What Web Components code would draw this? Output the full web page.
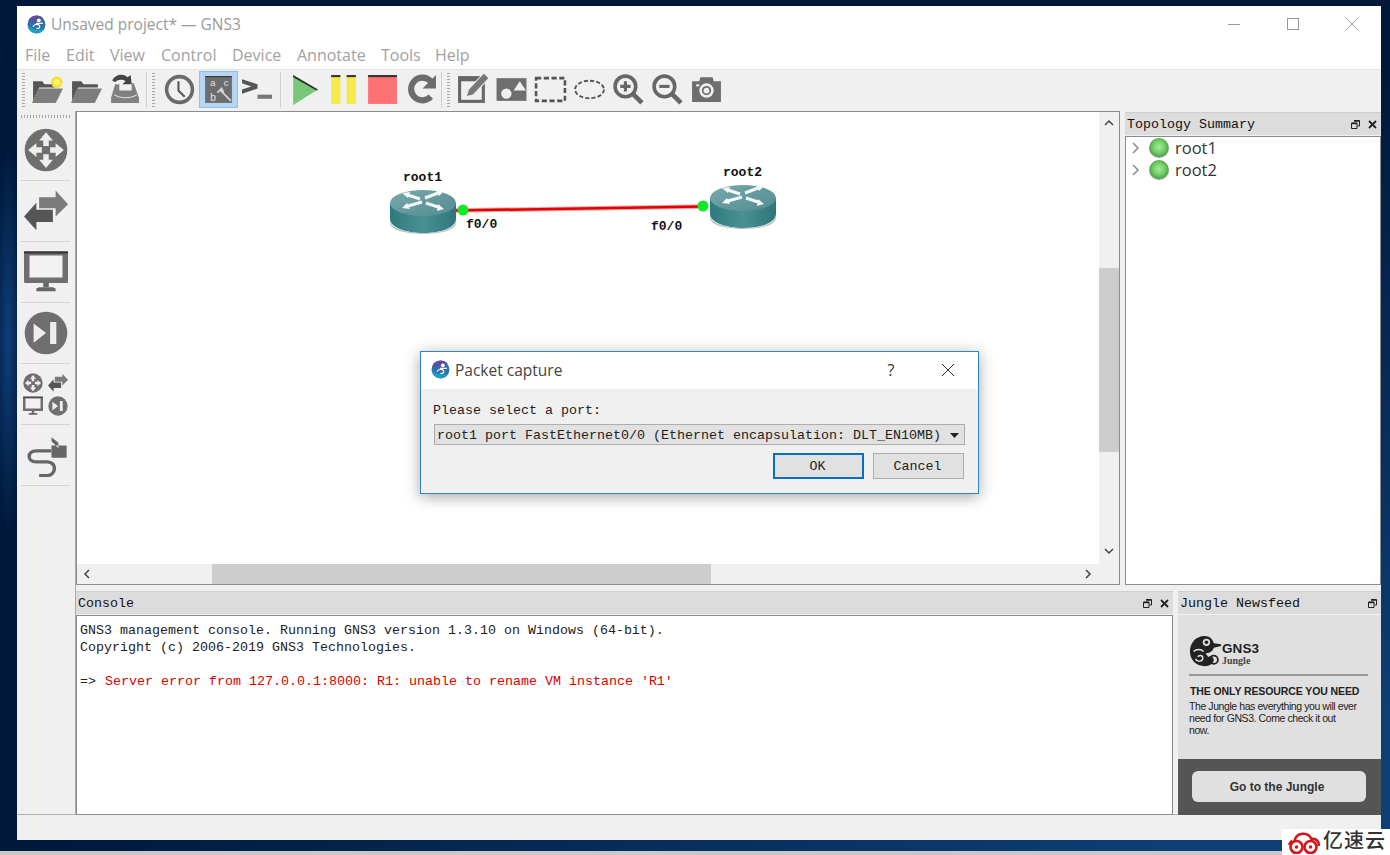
<!DOCTYPE html>
<html lang="en">
<head>
<meta charset="utf-8">
<title>GNS3</title>
<style>
  html, body { margin: 0; padding: 0; height: 855px; overflow: hidden; }
  body { font-family: "Liberation Mono", monospace; }
</style>
</head>
<body>
<gns-desktop>
  <gns-window>
    <gns-titlebar label="Unsaved project* — GNS3"></gns-titlebar>
    <gns-menubar></gns-menubar>
    <gns-toolbar></gns-toolbar>
    <gns-workspace></gns-workspace>
    <gns-dialog></gns-dialog>
  </gns-window>
  <gns-watermark></gns-watermark>
</gns-desktop>

<script>
// Icons are all drawn in a 32x32 box unless they bring their own viewBox
const ICONS = {
  folderNew: `<path d="M2 8h9l2 3h10v3H8L2 27z" fill="#555"/><path d="M7 15h24l-7 14H1z" fill="#7d7d7d"/><circle cx="25" cy="9" r="5.5" fill="#f2e22e"/><circle cx="25" cy="9" r="3" fill="#fff27a"/>`,
  folderOpen: `<path d="M2 8h9l2 3h14v3H8L2 27z" fill="#555"/><path d="M7 15h24l-7 14H1z" fill="#7d7d7d"/>`,
  save: `<path d="M6 11h4v6h12v-7h2l5 14v5H2v-5z" fill="#808080"/><path d="M5 21c6 4 16 4 22 0" stroke="#ddd" fill="none"/><path d="M3 7c3-6 11-7 15-3l3-2 1 9h-9l3-3c-3-2-7-2-10 1z" fill="#444"/>`,
  clock: `<circle cx="16" cy="16" r="12.5" fill="#f0f0f0" stroke="#6a6a6a" stroke-width="3.5"/><path d="M15 8v9l6 6" fill="none" stroke="#555" stroke-width="2"/>`,
  note: `<rect x="2" y="3" width="26" height="26" fill="#666"/><rect x="5" y="8" width="20" height="18" fill="#f0f0f0"/><path d="M27 0l5 5-15 16-7 2 2-7z" fill="#777" stroke="#f0f0f0" stroke-width="1"/>`,
  labels: `<rect x="3" y="3" width="26" height="26" fill="#6d6d6d"/><rect x="3" y="3" width="26" height="1" fill="#333"/><text x="8" y="13" font-size="9" font-family="Liberation Sans" fill="#e4e4e4">a</text><text x="21" y="13" font-size="9" font-family="Liberation Sans" fill="#e4e4e4">c</text><text x="8" y="27" font-size="10" font-family="Liberation Sans" fill="#e4e4e4">b</text><path d="M15 19l4-4 2 4M18 17l10 10" fill="none" stroke="#d8d8d8" stroke-width="1.6"/>`,
  terminal: `<path d="M1 6l15 5v4L1 20v-4l9-3-9-3z" fill="#555"/><rect x="16" y="21" width="14" height="4" fill="#777"/>`,
  play: `<path d="M5 2l24 14L5 31z" fill="#78c878"/><path d="M5 2l24 14-1.5 1L5 4z" fill="#333"/>`,
  pause: `<rect x="4" y="2" width="9" height="28" fill="#f4ea4a"/><rect x="19" y="2" width="9" height="28" fill="#f4ea4a"/><rect x="4" y="2" width="9" height="2" fill="#333"/><rect x="19" y="2" width="9" height="2" fill="#333"/>`,
  stop: `<rect x="2" y="2" width="28" height="28" fill="#ff7274"/><rect x="2" y="2" width="28" height="2" fill="#333"/>`,
  reload: `<path d="M25 23a11 11 0 1 1 0-15" fill="none" stroke="#6c6c6c" stroke-width="6"/><path d="M30 2v13H17z" fill="#6c6c6c"/>`,
  image: `<rect x="1.5" y="5" width="29" height="22" fill="#6e6e6e"/><circle cx="11" cy="20" r="5" fill="#f0f0f0"/><path d="M18 17l6-9 6 9z" fill="#f0f0f0"/>`,
  rect: `<rect x="2" y="5" width="28" height="22" fill="none" stroke="#555" stroke-width="2.5" stroke-dasharray="5 2.5"/>`,
  ellipse: `<ellipse cx="16" cy="16" rx="14" ry="8.5" fill="none" stroke="#555" stroke-width="1.8" stroke-dasharray="4 2"/>`,
  zoomIn: `<circle cx="13" cy="13" r="10" fill="#f0f0f0" stroke="#666" stroke-width="3.5"/><path d="M20 20l9 9" stroke="#666" stroke-width="4.5"/><path d="M8 13h10M13 8v10" stroke="#666" stroke-width="3"/>`,
  zoomOut: `<circle cx="13" cy="13" r="10" fill="#f0f0f0" stroke="#666" stroke-width="3.5"/><path d="M20 20l9 9" stroke="#666" stroke-width="4.5"/><path d="M8 13h10" stroke="#666" stroke-width="3"/>`,
  camera: `<path d="M2 8h7l1-4h12l1 4h7v20H2z" fill="#6e6e6e"/><rect x="6" y="11" width="3" height="2" fill="#eee"/><circle cx="16" cy="17" r="7" fill="#f0f0f0"/><circle cx="16" cy="17" r="4.5" fill="#6e6e6e"/><circle cx="16" cy="17" r="2.8" fill="#f0f0f0"/>`,
  routers: `<circle cx="16" cy="16" r="15.5" fill="#6f6f6f"/><path d="M16 3l5 6h-3v4h-4V9h-3zM16 29l-5-6h3v-4h4v4h3zM3 16l6-5v3h4v4H9v3zM29 16l-6 5v-3h-4v-4h4v-3z" fill="#eee"/>`,
  switches: `<path d="M11 5h12V0l9 10-9 9v-6H11z" fill="#7a7a7a" transform="translate(0 1)"/><path d="M21 15H9v-5L0 20l9 10v-6h12z" fill="#555"/>`,
  monitor: `<rect x="0" y="1" width="32" height="23" rx="1" fill="#6e6e6e"/><rect x="0" y="1" width="32" height="1.5" fill="#333"/><rect x="4" y="4" width="24" height="16" fill="#f2f2f2"/><rect x="14" y="24" width="4" height="3" fill="#666"/><path d="M9 30v-2l2-1h10l2 1v2z" fill="#666"/>`,
  skip: `<circle cx="16" cy="16" r="15.5" fill="#6f6f6f"/><path d="M7 9l9 7-9 7z" fill="#eee"/><rect x="19" y="8" width="4.5" height="16" fill="#eee"/>`,
  cable: `<path d="M25 7l-5-4v3l5 5zM20 9h11v9H20z" fill="#666"/><path d="M20 13H9c-7 0-7 8 0 8h8c7 0 7 10-1 10h-5" fill="none" stroke="#666" stroke-width="2.5"/>`,
  logo: `<circle cx="16" cy="16" r="15" fill="#2f6fa8"/><path d="M16 1a15 15 0 0 0-14 10c5-1 12 0 15 1 5-2 9-4 10-7a15 15 0 0 0-11-4z" fill="#5c4ea0"/><path d="M1 17a15 15 0 0 0 28 6c-7 3-20 2-28-6z" fill="#1d9fc0"/><circle cx="20" cy="9" r="3.2" fill="#fff"/><path d="M10 20c2-5 9-5 11-2s-2 6-5 4" fill="none" stroke="#fff" stroke-width="2"/><path d="M15 14h12" stroke="#fff" stroke-width="2"/>`,
  logoDark: `<path d="M17 1C8 1 1 8 1 18c0 9 7 16 16 16 6 0 10-3 10-7 0-3-4-5-6-3l-3-4c4 0 8-2 9-6l8-2v-2l-8-1c-1-5-5-8-10-8z" fill="#222"/><circle cx="19" cy="8" r="4" fill="#e0e0e0"/><circle cx="19" cy="8" r="2" fill="#222"/><circle cx="27" cy="27" r="4.5" fill="none" stroke="#222" stroke-width="2"/><path d="M5 18c3-3 8-3 11 0M7 26c2 4 8 3 8-1s-5-3-5-1" fill="none" stroke="#e0e0e0" stroke-width="1.6"/>`
};

function icon(name, size, box = 32) {
  return `<svg width="${size}" height="${size}" viewBox="0 0 ${box} ${box}" aria-hidden="true">${ICONS[name]}</svg>`;
}

// Small helper, each element is just a shadow root with its own style + markup
class Base extends HTMLElement {
  constructor() {
    super();
    this.attachShadow({ mode: 'open' });
  }
  render(css, html) {
    this.shadowRoot.innerHTML = `<style>${css}</style>${html}`;
  }
}

class GnsDesktop extends Base {
  connectedCallback() {
    this.render(`
      :host { display: block; position: relative; width: 1390px; height: 855px; overflow: hidden;
        background:
          radial-gradient(14px 200px at 8px 340px, #0e3f7a 0, rgba(14,63,122,0) 100%),
          linear-gradient(150deg, #00183a 0 52%, #0d3f76 92%); }
      .top { padding: 6px 9px 0 17px; height: 851px; box-sizing: border-box; }
      .strip { height: 4px; background: #c8c8c8; }
    `, `<div class="top"><slot></slot></div><div class="strip"></div>`);
  }
}

class GnsWindow extends Base {
  connectedCallback() {
    this.render(`
      :host { display: flex; flex-direction: column; position: relative; width: 1364px; height: 834px;
        background: #f0f0f0; }
    `, `<slot></slot>`);
  }
}

class GnsTitlebar extends Base {
  connectedCallback() {
    this.render(`
      :host { display: flex; align-items: center; height: 36px; background: #fff; flex: none;
        padding-left: 10px; font: 15.5px "Open Sans", sans-serif; color: #9a9a9a; }
      span { margin-left: 5px; }
      .btns { margin-left: auto; display: flex; }
      .btns div { width: 59px; height: 36px; display: flex; align-items: center; justify-content: center; }
      svg { display: block; }
    `, `${icon('logo', 19)}<span>${this.getAttribute('label')}</span>
      <div class="btns">
        <div><svg width="12" height="12"><path d="M0 6.5h12" stroke="#999"/></svg></div>
        <div><svg width="12" height="12"><rect x=".5" y=".5" width="11" height="11" fill="none" stroke="#999"/></svg></div>
        <div><svg width="12" height="12"><path d="M0 0l12 12M12 0L0 12" stroke="#999"/></svg></div>
      </div>`);
  }
}

class GnsMenubar extends Base {
  connectedCallback() {
    const items = [['File', 8], ['Edit', 49], ['View', 93], ['Control', 144], ['Device', 215], ['Annotate', 280], ['Tools', 364], ['Help', 418]];
    const html = items.map(([t, x], i) => {
      const next = items[i + 1] ? items[i + 1][1] : x + 40;
      return `<span style="width:${next - x}px">${t}</span>`;
    }).join('');
    this.render(`
      :host { display: flex; align-items: center; height: 27px; flex: none; background: #fff; padding: 0 0 2px 8px; box-sizing: border-box;
        font: 16px "Open Sans", sans-serif; color: #a2a2a2; }
      span { display: block; }
    `, html);
  }
}

class GnsToolbar extends Base {
  connectedCallback() {
    const btn = (n, on) => `<div class="b${on ? ' on' : ''}">${icon(n, 33)}</div>`;
    this.render(`
      :host { display: flex; align-items: center; height: 42px; flex: none; background: #f0f0f0;
        box-sizing: border-box; border-top: 1px solid #e4e4e4; padding: 0 0 2px 5px; }
      .h { width: 3px; height: 34px; flex: none;
        background: repeating-linear-gradient(to bottom, #a8a8a8 0 1px, transparent 1px 3px); }
      .b { width: 39px; height: 37px; flex: none; display: flex; align-items: center; justify-content: center; box-sizing: border-box; }
      .on { background: #b5d6f2; border: 1px solid #8ec0e8; }
      .s { width: 1px; height: 36px; background: #d0d0d0; flex: none; }
      svg { display: block; }
    `, `
      <div class="h" style="margin-right:3px"></div>
      ${btn('folderNew')}${btn('folderOpen')}${btn('save')}
      <div class="s" style="margin:0 5px 0 1px"></div>
      <div class="h" style="margin-right:5px"></div>
      ${btn('clock')}${btn('labels', true)}${btn('terminal')}
      <div class="s" style="margin:0 4px 0 3px"></div>
      ${btn('play')}${btn('pause')}${btn('stop')}${btn('reload')}
      <div class="s" style="margin:0 5px 0 0"></div>
      <div class="h" style="margin-right:3px"></div>
      ${btn('note')}${btn('image')}${btn('rect')}${btn('ellipse')}${btn('zoomIn')}${btn('zoomOut')}${btn('camera')}
    `);
  }
}

class GnsWorkspace extends Base {
  connectedCallback() {
    this.render(`
      :host { display: block; flex: 1; min-height: 0; }
      .grid { display: grid; grid-template-columns: 59px 1fr; height: 704px; border-bottom: 1px solid #b0b0b0; box-sizing: border-box; }
      .right { display: flex; flex-direction: column; }
      .top { display: flex; gap: 5px; height: 480px; }
      .bottom { display: flex; gap: 5px; height: 223px; }
      gns-canvas { width: 1044px; height: 474px; }
      .topo { width: 256px; height: 473px; margin-top: 1px; }
      .console { width: 1097px; height: 224px; }
      .jungle { width: 203px; height: 224px; }
      .status { height: 25px; }
    `, `
      <div class="grid">
        <gns-devices></gns-devices>
        <div class="right">
          <div class="top">
            <gns-canvas></gns-canvas>
            <gns-dock class="topo" label="Topology Summary" closable><gns-topology></gns-topology></gns-dock>
          </div>
          <div class="bottom">
            <gns-dock class="console" label="Console" closable><gns-console></gns-console></gns-dock>
            <gns-dock class="jungle" label="Jungle Newsfeed"><gns-jungle></gns-jungle></gns-dock>
          </div>
        </div>
      </div>
      <div class="status"></div>
    `);
  }
}

class GnsDevices extends Base {
  connectedCallback() {
    const row = (n) => `<div class="r">${icon(n, 44)}</div>`;
    this.render(`
      :host { display: block; border-right: 1px solid #aaa; box-sizing: border-box; height: 703px; padding-top: 4px; }
      .h { height: 3px; margin: 0 5px 0 4px; background: repeating-linear-gradient(to right, #a8a8a8 0 1px, transparent 1px 3px); }
      .r { height: 60px; margin: 0 5px 0 4px; border-bottom: 1px solid #d4d4d4; display: flex; align-items: center; justify-content: center; }
      .first { padding-top: 2px; }
      .q { display: grid; grid-template-columns: 22px 22px; gap: 3px; margin-left: 1px; }
      svg { display: block; }
    `, `
      <div class="h"></div>
      <div class="r first">${icon('routers', 44)}</div>
      ${row('switches')}${row('monitor')}${row('skip')}
      <div class="r"><div class="q">${icon('routers', 20)}${icon('switches', 20)}${icon('monitor', 20)}${icon('skip', 20)}</div></div>
      ${row('cable')}
    `);
  }
}

class GnsCanvas extends Base {
  connectedCallback() {
    const chev = (d) => `<svg width="10" height="10" viewBox="0 0 10 10"><path d="${d}" fill="none" stroke="#444" stroke-width="1.5"/></svg>`;
    this.render(`
      :host { display: block; position: relative; box-sizing: border-box; border: 1px solid #8c8c8c; background: #fff; }
      .vbar, .hbar { position: absolute; background: #f0f0f0; display: flex; }
      .vbar { right: 0; top: 0; width: 20px; bottom: 20px; flex-direction: column; align-items: center; justify-content: space-between; padding: 6px 0 8px; box-sizing: border-box; }
      .hbar { left: 0; bottom: 0; height: 20px; right: 20px; align-items: center; justify-content: space-between; padding: 0 6px 0 5px; box-sizing: border-box; }
      .corner { position: absolute; right: 0; bottom: 0; width: 20px; height: 20px; background: #f0f0f0; }
      .vt { position: absolute; left: 0; width: 20px; top: 156px; height: 184px; background: #cdcdcd; }
      .ht { position: absolute; top: 0; height: 20px; left: 135px; width: 499px; background: #cdcdcd; }
      svg { display: block; position: relative; }
      gns-router { position: absolute; }
      .lbl { position: absolute; font: bold 13px "Liberation Mono", monospace; color: #111; line-height: 14px; }
      .link { position: absolute; left: 0; top: 0; }
    `, `
      <svg class="link" width="1024" height="300">
        <path d="M378 98.5L626 94.5" stroke="#f3a6a6" stroke-width="4.5"/>
        <path d="M378 98.5L626 94.5" stroke="#e30000" stroke-width="2.5"/>
        <circle cx="386" cy="98" r="5.5" fill="#11e82a"/><circle cx="626" cy="94" r="5.5" fill="#11e82a"/>
      </svg>
      <gns-router style="left:313px;top:77px"></gns-router>
      <gns-router style="left:633px;top:72px"></gns-router>
      <div class="lbl" style="left:326px;top:59px">root1</div>
      <div class="lbl" style="left:646px;top:54px">root2</div>
      <div class="lbl" style="left:389px;top:106px">f0/0</div>
      <div class="lbl" style="left:574px;top:108px">f0/0</div>
      <div class="vbar">${chev('M1 7l4-4 4 4')}<div class="vt"></div>${chev('M1 3l4 4 4-4')}</div>
      <div class="hbar">${chev('M7 1L3 5l4 4')}<div class="ht"></div>${chev('M3 1l4 4-4 4')}</div>
      <div class="corner"></div>
    `);
  }
}

class GnsRouter extends Base {
  connectedCallback() {
    this.render(`
      :host { display: block; width: 67px; height: 45px; }
      svg { display: block; }
    `, `<svg width="67" height="45" viewBox="0 0 67 45">
      <defs>
        <linearGradient id="s" x1="0" x2="1"><stop offset="0" stop-color="#2f7a7e"/><stop offset=".5" stop-color="#4a9094"/><stop offset="1" stop-color="#2e767a"/></linearGradient>
        <linearGradient id="t" x1="0" x2="1" y1="0" y2="1"><stop offset="0" stop-color="#7aa8ac"/><stop offset="1" stop-color="#4f8d92"/></linearGradient>
      </defs>
      <path d="M0 14v16c0 8 15 14 33.5 14S66 38 66 30V14z" fill="url(#s)"/>
      <path d="M0 31c0 8 15 13 33.5 13S66 39 66 31v3c0 7-15 11-32.5 11S0 41 0 34z" fill="#b9c4c4"/>
      <ellipse cx="33" cy="14" rx="33" ry="13" fill="url(#t)"/>
      <g stroke="#f6f9f9" stroke-width="3" fill="none">
        <path d="M18 6l12 4M35 9l13-5M32 13l-14 4M36 14l12 4"/>
      </g>
      <path d="M12 4l8-1-2 6zM54 2l-8-1 3 6zM12 19l8 1-3-6zM54 20l-7 2 1-7z" fill="#f6f9f9"/>
    </svg>`);
  }
}

class GnsDock extends Base {
  connectedCallback() {
    const close = this.hasAttribute('closable')
      ? `<svg width="9" height="9" viewBox="0 0 9 9"><path d="M1 1l7 7M8 1L1 8" stroke="#222" stroke-width="1.8"/></svg>` : '';
    this.render(`
      :host { display: flex; flex-direction: column; box-sizing: border-box; }
      .t { height: 23px; flex: none; background: #dcdcdc; border-top: 1px solid #cfcfcf; box-sizing: border-box; display: flex; align-items: center;
        padding: 1px 4px 0 2px; font: 13.33px/20px "Liberation Mono", monospace; color: #111; white-space: pre; }
      .fl { margin-left: auto; display: flex; gap: 8px; align-items: center; margin-top: -1px; }
      .c { flex: 1; min-height: 0; margin-top: 1px; border: 1px solid #8c8c8c; box-sizing: border-box; background: #fff; display: flex; }
      svg { display: block; }
      ::slotted(*) { flex: 1; min-width: 0; }
    `, `<div class="t">${this.getAttribute('label')}<div class="fl">
        <svg width="9" height="9" viewBox="0 0 9 9"><path d="M3 .5h5.5V6H6.5M.5 3H6v5.5H.5z" fill="none" stroke="#222"/><path d="M3 1h5M1 3.5h5" stroke="#222" stroke-width="1.4"/></svg>${close}
      </div></div><div class="c"><slot></slot></div>`);
  }
}

class GnsTopology extends Base {
  connectedCallback() {
    const row = (t) => `<div class="r">
      <svg width="8" height="12" viewBox="0 0 8 12"><path d="M1 1l5 5-5 5" fill="none" stroke="#8a8a8a" stroke-width="1.5"/></svg>
      <span class="led"></span><span class="n">${t}</span></div>`;
    this.render(`
      :host { display: block; font: 16.5px "Open Sans", sans-serif; color: #333; }
      .r { display: flex; align-items: center; height: 22px; padding-left: 6px; }
      .n { padding-bottom: 2px; }
      .led { width: 20px; height: 20px; border-radius: 50%; margin: 0 6px 0 9px;
        background: radial-gradient(circle at 50% 45%, #a8e8a0 0, #6cd060 42%, #55aa55 60%, #8f9f8f 72%, #d8dcd8 88%, #f4f6f4 100%); }
    `, row('root1') + row('root2'));
  }
}

class GnsConsole extends Base {
  connectedCallback() {
    this.render(`
      :host { display: block; padding: 6px 0 0 3px; font: 13.33px/17px "Liberation Mono", monospace; color: #222; white-space: pre; }
      b { font-weight: normal; color: #d80000; margin-left: 1px; }
    `, `GNS3 management console. Running GNS3 version 1.3.10 on Windows (64-bit).
Copyright (c) 2006-2019 GNS3 Technologies.

=> <b>Server error from 127.0.0.1:8000: R1: unable to rename VM instance 'R1'</b>`);
  }
}

class GnsJungle extends Base {
  connectedCallback() {
    this.render(`
      :host { display: flex; flex-direction: column; background: #e0e0e0; font-family: "Liberation Sans", sans-serif; color: #222; margin: -1px; }
      .main { flex: 1; padding: 19px 13px 0 11px; }
      .brand { display: flex; align-items: center; height: 35px; }
      .name { font-weight: bold; font-size: 13.5px; line-height: 14px; letter-spacing: .1px; margin-top: 5px; }
      .sub { font: bold 10px/10px "Liberation Serif", serif; color: #444; }
      hr { border: 0; height: 2px; background: #999; margin: 5px 0 8px; }
      h3 { margin: 0 0 2px 1px; font-size: 10.5px; line-height: 14px; white-space: nowrap; letter-spacing: -.1px; color: #222; }
      p { margin: 0; font-size: 10.5px; line-height: 12px; letter-spacing: -.42px; }
      .foot { height: 56px; flex: none; background: #555; display: flex; align-items: center; padding-left: 14px; box-sizing: border-box; }
      .go { width: 174px; height: 31px; margin-top: -2px; border-radius: 6px; background: #e0e0e0; color: #333; font-weight: bold; font-size: 12px;
        display: flex; align-items: center; justify-content: center; padding: 1px 4px 0 0; box-sizing: border-box; }
      svg { display: block; }
    `, `
      <div class="main">
        <div class="brand">${icon('logoDark', 33, 36)}<div><div class="name">GNS3</div><div class="sub">Jungle</div></div></div>
        <hr>
        <h3>THE ONLY RESOURCE YOU NEED</h3>
        <p>The Jungle has everything you will ever<br>need for GNS3. Come check it out<br>now.</p>
      </div>
      <div class="foot"><div class="go">Go to the Jungle</div></div>
    `);
  }
}

class GnsDialog extends Base {
  connectedCallback() {
    this.render(`
      :host { position: absolute; left: 403px; top: 345px; width: 559px; height: 143px; box-sizing: border-box;
        border: 1px solid #2e84c6; background: #f0f0f0; box-shadow: 0 3px 14px rgba(0,0,0,.35); display: flex; flex-direction: column;
        font: 13.33px "Liberation Mono", monospace; color: #222; }
      .t { height: 37px; flex: none; background: #fff; display: flex; align-items: center; padding: 0 0 2px 10px; box-sizing: border-box;
        font: 15.5px "Open Sans", sans-serif; color: #444; }
      .t span { margin-left: 5px; }
      .q { margin-left: auto; width: 60px; padding-left: 6px; box-sizing: border-box; text-align: center; font-size: 16px; color: #333; }
      .x { width: 60px; display: flex; justify-content: center; }
      .body { padding: 14px 14px 0 12px; }
      .lab { line-height: 16px; white-space: pre; }
      .combo { margin: 5px -1px 8px 1px; height: 21px; box-sizing: border-box; border: 1px solid #adadad; background: #e1e1e1;
        display: flex; align-items: center; padding: 1px 5px 0 2px; white-space: pre; }
      .combo svg { margin-left: auto; }
      .btns { display: flex; justify-content: flex-end; gap: 9px; }
      .b { width: 91px; height: 26px; box-sizing: border-box; border: 1px solid #adadad; background: #e1e1e1; display: flex; align-items: center; justify-content: center; padding-right: 2px; }
      .b.def { border: 2px solid #0a6fbf; }
      svg { display: block; }
    `, `
      <div class="t">${icon('logo', 19)}<span>Packet capture</span><div class="q">?</div>
        <div class="x"><svg width="12" height="12"><path d="M0 0l12 12M12 0L0 12" stroke="#333"/></svg></div></div>
      <div class="body">
        <div class="lab">Please select a port:</div>
        <div class="combo">root1 port FastEthernet0/0 (Ethernet encapsulation: DLT_EN10MB)<svg width="9" height="5"><path d="M0 0h9L4.5 5z" fill="#222"/></svg></div>
        <div class="btns"><div class="b def">OK</div><div class="b">Cancel</div></div>
      </div>
    `);
  }
}

class GnsWatermark extends Base {
  connectedCallback() {
    this.render(`
      :host { position: absolute; right: 0; bottom: 0; width: 108px; height: 26px; background: #fff; display: flex; align-items: center; padding-left: 4px; box-sizing: border-box;
        font: 500 20px/22px "Noto Sans CJK SC", sans-serif; color: #333; }
      svg { display: block; flex: none; margin-right: 2px; }
      span { letter-spacing: 1px; margin-bottom: 4px; }
    `, `<svg width="35" height="24" viewBox="0 0 34 24"><path d="M8 11a9 9 0 0 1 17-2c5-1 8 3 7 7M3 15c0-2 1-3 3-4" fill="none" stroke="#d7141a" stroke-width="2.6"/><circle cx="10" cy="17" r="6" fill="none" stroke="#d7141a" stroke-width="2.6"/><circle cx="24" cy="17" r="6" fill="none" stroke="#d7141a" stroke-width="2.6"/><circle cx="10" cy="17" r="1.8" fill="#d7141a"/><circle cx="24" cy="17" r="1.8" fill="#d7141a"/></svg><span>亿速云</span>`);
  }
}

customElements.define('gns-desktop', GnsDesktop);
customElements.define('gns-window', GnsWindow);
customElements.define('gns-titlebar', GnsTitlebar);
customElements.define('gns-menubar', GnsMenubar);
customElements.define('gns-toolbar', GnsToolbar);
customElements.define('gns-workspace', GnsWorkspace);
customElements.define('gns-devices', GnsDevices);
customElements.define('gns-canvas', GnsCanvas);
customElements.define('gns-router', GnsRouter);
customElements.define('gns-dock', GnsDock);
customElements.define('gns-topology', GnsTopology);
customElements.define('gns-console', GnsConsole);
customElements.define('gns-jungle', GnsJungle);
customElements.define('gns-dialog', GnsDialog);
customElements.define('gns-watermark', GnsWatermark);
</script>
</body>
</html>
